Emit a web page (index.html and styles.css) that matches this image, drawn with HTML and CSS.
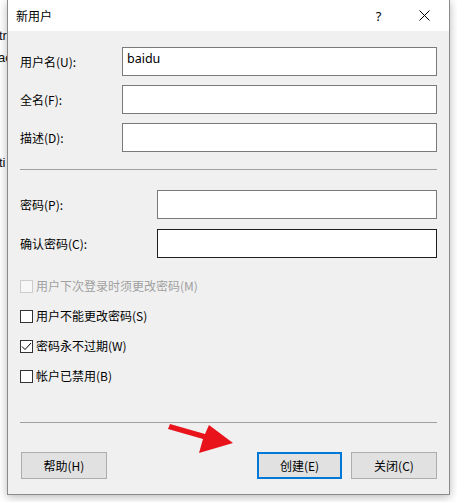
FILE: index.html
```html
<!DOCTYPE html>
<html lang="zh-CN">
<head>
<meta charset="utf-8">
<title>新用户</title>
<link rel="stylesheet" href="styles.css">
</head>
<body>
<div class="screen">
  <div class="behind">
    <span class="frag f1">tr</span>
    <span class="frag f2">ac</span>
    <span class="frag f3">ti</span>
  </div>
  <div class="dialog">
    <div class="titlebar">
      <span class="title">新用户</span>
      <span class="help">?</span>
      <span class="close">
        <svg width="11" height="11" viewBox="0 0 11 11"><path d="M0.5 0.5 L10.5 10.5 M10.5 0.5 L0.5 10.5" stroke="#000" stroke-width="1" fill="none"/></svg>
      </span>
    </div>
    <div class="body">
      <div class="group g1">
        <span class="label">用户名(U):</span><div class="input">baidu</div>
        <span class="label">全名(F):</span><div class="input"></div>
        <span class="label">描述(D):</span><div class="input"></div>
      </div>
      <div class="sep sep1"></div>
      <div class="group g2">
        <span class="label">密码(P):</span><div class="input"></div>
        <span class="label">确认密码(C):</span><div class="input focus"></div>
      </div>
      <div class="checks">
        <div class="check disabled"><span class="box"></span><span>用户下次登录时须更改密码(M)</span></div>
        <div class="check"><span class="box"></span><span>用户不能更改密码(S)</span></div>
        <div class="check"><span class="box"><svg width="11" height="11" viewBox="0 0 11 11"><polyline points="1,5.5 4,8.5 10,2" fill="none" stroke="#000" stroke-width="1"/></svg></span><span>密码永不过期(W)</span></div>
        <div class="check"><span class="box"></span><span>帐户已禁用(B)</span></div>
      </div>
      <div class="spacer"></div>
      <div class="sep"></div>
      <div class="buttons">
        <div class="btn">帮助(H)</div>
        <div class="right">
          <div class="btn default">创建(E)</div>
          <div class="btn">关闭(C)</div>
        </div>
      </div>
    </div>
  </div>
  <svg class="arrow" width="80" height="40" viewBox="0 0 80 40">
    <polygon points="2,1 37,11 41,2 65,20 31,30 35,16 0,6" fill="#e8131b"/>
  </svg>
</div>
</body>
</html>
```

FILE: styles.css
```css
html, body {
  margin: 0;
  padding: 0;
  background: #ffffff;
}
body {
  font-family: "Noto Sans CJK SC", "Noto Sans", sans-serif;
  font-size: 12px;
  color: #000;
}
.screen {
  position: relative;
  width: 457px;
  height: 502px;
  display: flex;
  overflow: hidden;
}
.behind {
  width: 7px;
  flex: none;
  display: flex;
  flex-direction: column;
  overflow: hidden;
  font-family: "Liberation Sans", sans-serif;
  font-size: 13px;
  line-height: 14px;
  color: #111;
}
.frag { white-space: nowrap; margin-left: -1px; }
.f1 { margin-top: 29px; }
.f2 { margin-top: 8px; margin-left: -2px; }
.f3 { margin-top: 91px; }

.dialog {
  width: 443px;
  height: 495px;
  box-sizing: border-box;
  border: 1px solid #8a8a8a;
  border-top: none;
  background: #f0f0f0;
  display: flex;
  flex-direction: column;
  box-shadow: 0 2px 9px rgba(0,0,0,0.28);
  position: relative;
  z-index: 1;
}
.titlebar {
  height: 31px;
  flex: none;
  background: #fff;
  display: flex;
  align-items: center;
  padding-left: 8px;
}
.title {
  flex: 1;
  font-size: 12px;
  line-height: 16px;
}
.help {
  font-family: "Noto Sans", sans-serif;
  font-size: 13px;
  width: 45px;
  text-align: center;
}
.close {
  width: 46px;
  display: flex;
  justify-content: center;
  padding-right: 2px;
}
.close svg { display: block; }

.body {
  flex: 1;
  display: flex;
  flex-direction: column;
  padding: 16px 12px 15px 12px;
}
.group {
  display: grid;
  grid-auto-rows: 29px;
  align-items: center;
}
.g1 { grid-template-columns: 102px 1fr; row-gap: 9px; }
.g2 { grid-template-columns: 137px 1fr; row-gap: 10px; margin-top: 20px; }
.label { line-height: 16px; }
.input {
  height: 29px;
  box-sizing: border-box;
  background: #fff;
  border: 1px solid #7a7a7a;
  font-family: "Noto Sans", sans-serif;
  font-size: 12.5px;
  line-height: 20px;
  padding: 1px 4px;
}
.input.focus { border-color: #1e1e1e; }
.sep {
  height: 1px;
  background: #a0a0a0;
  flex: none;
}
.sep1 { margin-top: 17px; }

.checks {
  margin-top: 13px;
  display: flex;
  flex-direction: column;
}
.check {
  height: 30px;
  display: flex;
  align-items: center;
  gap: 3px;
  line-height: 16px;
}
.box {
  width: 13px;
  height: 13px;
  box-sizing: border-box;
  border: 1px solid #333;
  background: #fff;
  display: flex;
  align-items: center;
  justify-content: center;
}
.box svg { display: block; }
.check.disabled { color: #a0a0a0; }
.check.disabled .box { border-color: #cccccc; background: #f7f7f7; }
.spacer { flex: 1; }

.buttons {
  margin-top: 29px;
  display: flex;
  justify-content: space-between;
  padding-left: 1px;
}
.right { display: flex; gap: 9px; }
.btn {
  width: 86px;
  height: 27px;
  box-sizing: border-box;
  background: #e1e1e1;
  border: 1px solid #adadad;
  display: flex;
  align-items: center;
  justify-content: center;
  line-height: 16px;
}
.btn.default { border: 2px solid #0078d7; width: 85px; }

.arrow {
  position: absolute;
  left: 168px;
  top: 423px;
  z-index: 2;
}
```
